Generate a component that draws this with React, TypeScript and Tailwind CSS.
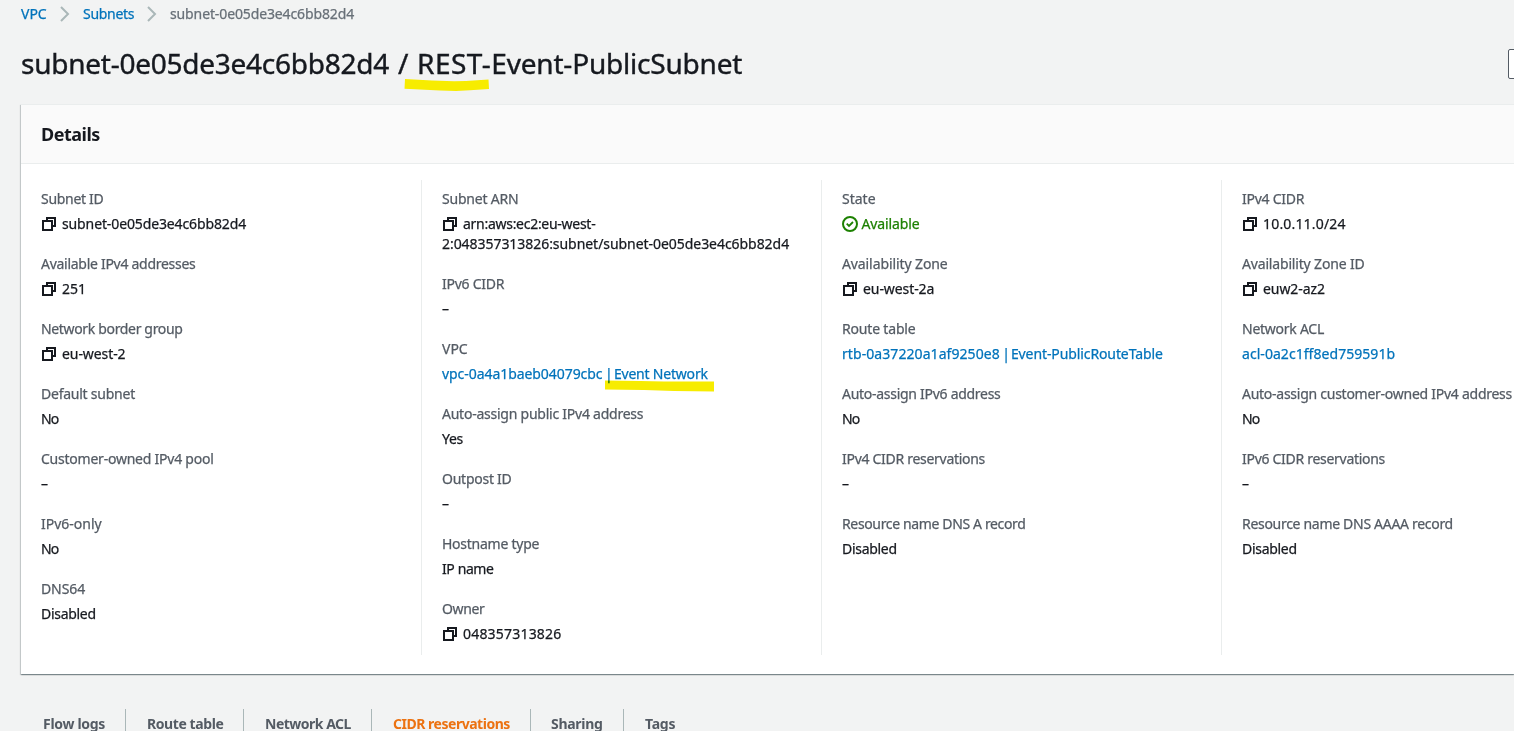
import React from "react";
import clsx from "clsx";

type Field = {
  label: string;
  labelClass: string;
  value: React.ReactNode;
  valueClass?: string;
  kind?: "copy" | "link" | "ok";
};

const columns: Field[][] = [
  [
    { label: "Subnet ID", labelClass: "tracking-[-0.3px]", value: "subnet-0e05de3e4c6bb82d4", valueClass: "tracking-[-0.12px]", kind: "copy" },
    { label: "Available IPv4 addresses", labelClass: "tracking-[-0.28px]", value: "251", kind: "copy" },
    { label: "Network border group", labelClass: "tracking-[-0.34px]", value: "eu-west-2", valueClass: "tracking-[-0.08px]", kind: "copy" },
    { label: "Default subnet", labelClass: "tracking-[-0.24px]", value: "No", valueClass: "tracking-[-0.8px]" },
    { label: "Customer-owned IPv4 pool", labelClass: "tracking-[-0.23px]", value: "–" },
    { label: "IPv6-only", labelClass: "tracking-normal", value: "No", valueClass: "tracking-[-0.8px]" },
    { label: "DNS64", labelClass: "tracking-[-0.1px]", value: "Disabled", valueClass: "tracking-[-0.3px]" },
  ],
  [
    {
      label: "Subnet ARN",
      labelClass: "tracking-[-0.2px]",
      value: (
        <>
          <span className="tracking-[-0.28px]">arn:aws:ec2:eu-west-</span>
          <br />
          2:048357313826:subnet/subnet-0e05de3e4c6bb82d4
        </>
      ),
      valueClass: "tracking-[-0.05px]",
      kind: "copy",
    },
    { label: "IPv6 CIDR", labelClass: "tracking-[-0.26px]", value: "–" },
    {
      label: "VPC",
      labelClass: "tracking-normal",
      value: (
        <>
          <span className="tracking-[-0.06px]">vpc-0a4a1baeb04079cbc</span>
          <span className="tracking-[-1.2px]"> | </span>
          <span className="relative">
            Event Network
            <svg className="absolute top-[15px] left-[-10px] mix-blend-multiply" width="112" height="14" viewBox="0 0 112 14">
              <path d="M1 1.5 36 2 60 2.5 110 2.5V12.5L70 12 40 11 1 10.5Z" fill="#f7ec00" />
            </svg>
          </span>
        </>
      ),
      valueClass: "tracking-[-0.2px]",
      kind: "link",
    },
    { label: "Auto-assign public IPv4 address", labelClass: "tracking-[-0.24px]", value: "Yes", valueClass: "tracking-[-0.3px]" },
    { label: "Outpost ID", labelClass: "tracking-[-0.25px]", value: "–" },
    { label: "Hostname type", labelClass: "tracking-[-0.25px]", value: "IP name", valueClass: "tracking-[-0.4px]" },
    { label: "Owner", labelClass: "tracking-[-0.4px]", value: "048357313826", valueClass: "tracking-[0.2px]", kind: "copy" },
  ],
  [
    { label: "State", labelClass: "tracking-normal", value: "Available", valueClass: "tracking-[-0.12px]", kind: "ok" },
    { label: "Availability Zone", labelClass: "tracking-[-0.1px]", value: "eu-west-2a", valueClass: "tracking-[-0.08px]", kind: "copy" },
    {
      label: "Route table",
      labelClass: "tracking-[-0.18px]",
      value: (
        <>
          <span className="tracking-[0.07px]">rtb-0a37220a1af9250e8</span>
          <span className="tracking-[-1.3px]"> | </span>
          Event-PublicRouteTable
        </>
      ),
      valueClass: "tracking-[-0.1px]",
      kind: "link",
    },
    { label: "Auto-assign IPv6 address", labelClass: "tracking-[-0.28px]", value: "No", valueClass: "tracking-[-0.8px]" },
    { label: "IPv4 CIDR reservations", labelClass: "tracking-[-0.29px]", value: "–" },
    { label: "Resource name DNS A record", labelClass: "tracking-[-0.36px]", value: "Disabled", valueClass: "tracking-[-0.3px]" },
  ],
  [
    { label: "IPv4 CIDR", labelClass: "tracking-[-0.26px]", value: "10.0.11.0/24", valueClass: "tracking-[0.18px]", kind: "copy" },
    { label: "Availability Zone ID", labelClass: "tracking-[-0.17px]", value: "euw2-az2", valueClass: "tracking-[-0.08px]", kind: "copy" },
    { label: "Network ACL", labelClass: "tracking-[-0.26px]", value: "acl-0a2c1ff8ed759591b", valueClass: "tracking-[0.05px]", kind: "link" },
    { label: "Auto-assign customer-owned IPv4 address", labelClass: "tracking-[-0.26px]", value: "No", valueClass: "tracking-[-0.8px]" },
    { label: "IPv6 CIDR reservations", labelClass: "tracking-[-0.29px]", value: "–" },
    { label: "Resource name DNS AAAA record", labelClass: "tracking-[-0.3px]", value: "Disabled", valueClass: "tracking-[-0.3px]" },
  ],
];

const tabs = [
  { label: "Flow logs", className: "w-[104px] pl-[22px] tracking-[-0.3px]" },
  { label: "Route table", className: "w-[118px] pl-[21px] tracking-[-0.42px]" },
  { label: "Network ACL", className: "w-[128px] pl-[21px] tracking-[-0.5px]" },
  { label: "CIDR reservations", className: "w-[159px] pl-[21px] tracking-[-0.48px] text-[#ec7211]" },
  { label: "Sharing", className: "w-[93px] pl-[20px] tracking-[-0.3px]" },
  { label: "Tags", className: "pl-[21px] tracking-[-0.25px]" },
];

function CopyIcon() {
  return (
    <svg className="mr-[6px] ml-px inline-block align-[-2px]" width="14" height="14" viewBox="0 0 14 14" fill="none" stroke="#16191f" strokeWidth="2">
      <path d="M5 4V1H13V9H10" />
      <rect x="1" y="4" width="9" height="9" />
    </svg>
  );
}

function CheckIcon() {
  return (
    <svg className="mr-[3.5px] inline-block align-[-3px]" width="16" height="16" viewBox="0 0 16 16" fill="none" stroke="#1d8102" strokeWidth="2">
      <circle cx="8" cy="8" r="7" />
      <path d="M4.7 7.7 7 9.9 11 6" strokeWidth="1.8" />
    </svg>
  );
}

function Chevron({ className }: { className: string }) {
  return (
    <svg className={className} width="10" height="16" viewBox="0 0 10 16" fill="none" stroke="#aab7b8" strokeWidth="2">
      <path d="M1 1 8 8 1 15" />
    </svg>
  );
}

export default function App() {
  return (
    <div className="h-[731px] w-full overflow-hidden bg-[#f2f3f3] pt-1 pl-[21px] font-['Noto_Sans',sans-serif] text-sm leading-5 whitespace-nowrap text-[#16191f]">
      <nav className="flex h-5 items-center text-[#0073bb] [-webkit-text-stroke:0.25px]">
        <span className="w-[39px]">VPC</span>
        <Chevron className="w-[10px]" />
        <span className="ml-[13px] w-[64px] tracking-[-0.3px]">Subnets</span>
        <Chevron className="w-[10px]" />
        <span className="ml-[13px] tracking-[-0.12px] text-[#687078]">subnet-0e05de3e4c6bb82d4</span>
      </nav>

      <div className="mt-[25px] flex h-[30px] items-center justify-between">
        <h1 className="-mt-0.5 flex text-[28px] leading-9 [-webkit-text-stroke:0.4px]">
          <span className="w-[377px] tracking-[-0.25px]">subnet-0e05de3e4c6bb82d4</span>
          <span className="w-[19px]">/</span>
          <span className="relative tracking-[-0.2px]">
            <span className="tracking-[0.5px]">REST-</span>Event-PublicSubnet
            <svg className="absolute top-[33px] left-[-13px]" width="86" height="14" viewBox="0 0 86 14">
              <path d="M1 1 28 2.5 50 3.3 62 3 84.5 1.5 85 11 66 12.2 52 13 36 12.5 0.5 10.8Z" fill="#f7ec00" />
            </svg>
          </span>
        </h1>
        <button className="-mr-4 h-[30px] w-[22px] rounded-[2px] border border-[#545b64] bg-white" aria-label="Actions" />
      </div>

      <section className="mt-[25px] h-[570px] border-t border-[#eaeded] bg-white shadow-[0_1px_1px_0_rgba(0,28,36,0.3),1px_1px_1px_0_rgba(0,28,36,0.15),-1px_1px_1px_0_rgba(0,28,36,0.15)]">
        <h2 className="flex h-[59px] items-center border-b border-[#eaeded] bg-[#fafafa] pl-5 text-[18px] font-bold tracking-[-0.5px]">Details</h2>
        <div className="flex pt-4 [-webkit-text-stroke:0.25px]">
          {columns.map((fields, i) => (
            <div
              key={i}
              className={clsx("flex h-[475px] w-[400px] shrink-0 flex-col gap-5 pt-[9px] pl-5", i > 0 && "border-l border-[#eaeded]")}
            >
              {fields.map((f) => (
                <div key={f.label} className="flex flex-col gap-[5px]">
                  <div className={clsx("text-[#545b64]", f.labelClass)}>{f.label}</div>
                  <div className={clsx(f.valueClass, f.kind === "link" && "text-[#0073bb]", f.kind === "ok" && "text-[#1d8102]")}>
                    {f.kind === "copy" && <CopyIcon />}
                    {f.kind === "ok" && <CheckIcon />}
                    {f.value}
                  </div>
                </div>
              ))}
            </div>
          ))}
        </div>
      </section>

      <div className="mt-[35px] flex h-[30px] font-bold text-[#545b64]">
        {tabs.map((t, i) => (
          <div key={t.label} className={clsx("shrink-0 pt-[5px]", i > 0 && "border-l border-[#aab7b8]", t.className)}>
            {t.label}
          </div>
        ))}
      </div>
    </div>
  );
}
